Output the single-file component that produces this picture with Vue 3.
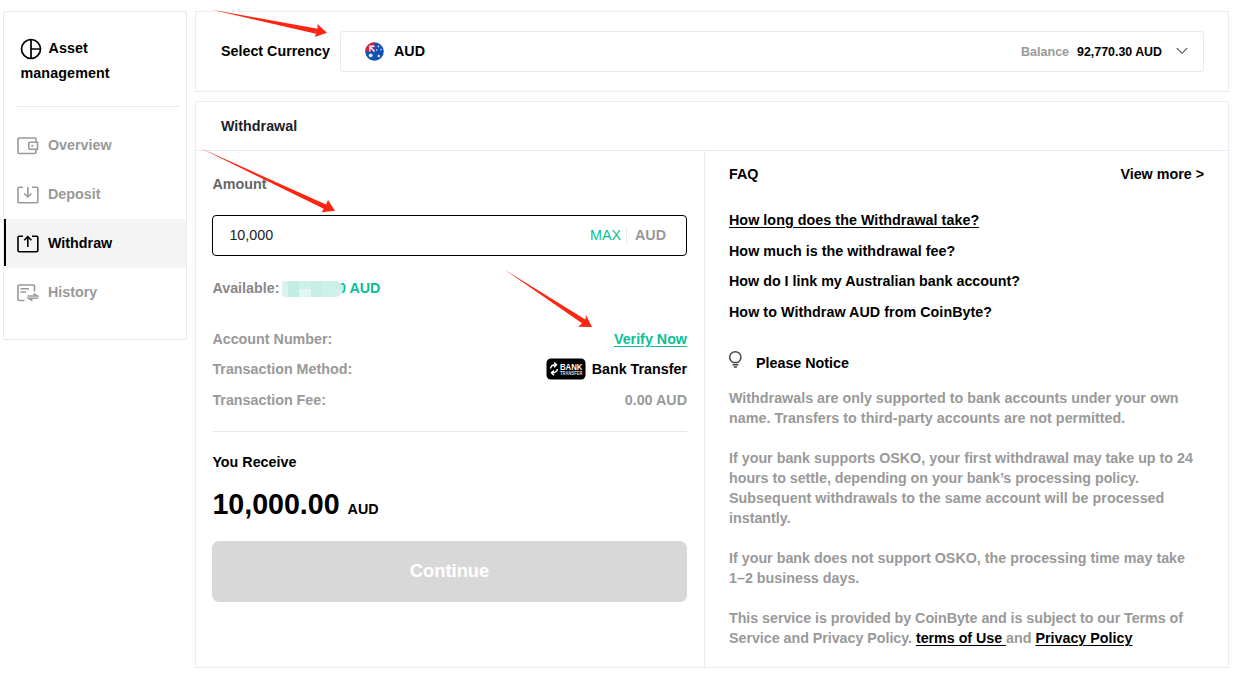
<script setup>
const faqs = [
  'How long does the Withdrawal take?',
  'How much is the withdrawal fee?',
  'How do I link my Australian bank account?',
  'How to Withdraw AUD from CoinByte?',
]
const navItems = [
  { id: 'overview', label: 'Overview' },
  { id: 'deposit', label: 'Deposit' },
  { id: 'withdraw', label: 'Withdraw', active: true },
  { id: 'history', label: 'History' },
]
const mosaic = ['#d9f3ee', '#c3ede3', '#cdf0e8', '#c7eee5', '#cdf0e8', '#c8eee6', '#d9f3ee', '#c3ede3', '#dff6f1', '#c7eee5', '#cdf0e8', '#d3f2eb']
</script>

<template>
  <div class="page">
    <aside class="sidebar">
      <div class="title">
        <svg class="pie" width="22" height="22" viewBox="0 0 22 22" fill="none" stroke="#000" stroke-width="1.7">
          <circle cx="11" cy="11" r="9.5" /><path d="M11 1.5v19M11 11h9.5" />
        </svg>Asset<br />management
      </div>
      <nav>
        <a v-for="n in navItems" :key="n.id" class="nav" :class="{ active: n.active }">
          <svg width="22" height="18" viewBox="0 0 22 18" fill="none" stroke="currentColor" stroke-width="1.6">
            <template v-if="n.id === 'overview'">
              <path d="M19 5V2.200Q19 1 17.800 1H2.200Q1 1 1 2.200V15.300Q1 16.500 2.200 16.500H17.800Q19 16.500 19 15.300V12.500" />
              <path d="M20.500 5.300H13Q11.800 5.300 11.800 6.500V11Q11.800 12.200 13 12.200H20.500Z" /><path d="M14.300 8.800h2" stroke-width="1.800" />
            </template>
            <template v-else-if="n.id === 'history'">
              <path d="M7.500 16.500H2.200Q1 16.500 1 15.300V2.200Q1 1 2.200 1H16.300Q17.500 1 17.500 2.200V7.500M3.500 4.700h8.500M3.500 8h5.500" />
              <path d="M10.500 12H20.500L16.500 9.700M21 14.200H11.500L15.500 16.700" />
            </template>
            <template v-else>
              <path d="M6 1.200H2Q1 1.200 1 2.200V15.500Q1 16.700 2.200 16.700H19.600Q20.800 16.700 20.800 15.500V2.200Q20.800 1.200 19.800 1.200H15" />
              <path v-if="n.active" d="M10.800 12V1.500M7.200 5.200L10.800 1.700L14.400 5.200" />
              <path v-else d="M10.800 1V11M7.200 7.500L10.800 11L14.400 7.500" />
            </template>
          </svg>
          <span>{{ n.label }}</span>
        </a>
      </nav>
    </aside>

    <main>
      <section class="card currency">
        <label>Select Currency</label>
        <div class="select">
          <svg class="flag" width="20" height="20" viewBox="0 0 20 20">
            <circle cx="9.500" cy="10.500" r="9.300" fill="#0f52b5" />
            <path d="M9.500 1.200A9.300 9.300 0 0 0 .200 10.500H9.500Z" fill="#d4213d" />
            <path d="M4.600 5.500L9.500 10.500M9.500 5.400H4.900V10.500" fill="none" stroke="#f3eef5" stroke-width="1.600" />
            <path d="M7.500 6.300H9.500V8.500ZM5.800 8V10.500H8Z" fill="#0f52b5" />
            <g fill="#e8f0ff"><circle cx="5.700" cy="14.300" r="1.900" /><circle cx="13.500" cy="5.300" r=".9" /><circle cx="16" cy="8.500" r=".8" /><circle cx="11.800" cy="9" r=".8" /><circle cx="13.700" cy="15" r="1.200" /></g>
          </svg>
          <b>AUD</b>
          <span class="bal">Balance</span>
          <span class="val">92,770.30 AUD</span>
          <svg class="chev" width="12" height="8" viewBox="0 0 12 8" fill="none" stroke="#4a5058" stroke-width="1.100"><path d="M.800 1.200L6 6.300L11.200 1.200" /></svg>
        </div>
      </section>

      <section class="card withdrawal">
        <h2>Withdrawal</h2>
        <div class="cols">
          <div class="form">
            <div class="amount">Amount</div>
            <div class="input"><span class="num">10,000</span><span class="max">MAX</span><span class="cur">AUD</span></div>
            <div class="avail">
              <span>Available:</span>
              <span class="money"><i class="mask"><i v-for="(c, i) in mosaic" :key="i" :style="{ background: c }"></i></i><em>0</em> AUD</span>
            </div>
            <div class="row"><span>Account Number:</span><a class="verify">Verify Now</a></div>
            <div class="row">
              <span>Transaction Method:</span>
              <span class="bank">
                <svg width="40" height="22" viewBox="0 0 40 22">
                  <rect x=".5" y=".5" width="39" height="21" rx="4.500" fill="#000" />
                  <g fill="none" stroke="#fff" stroke-width="1.500"><path d="M4.500 10.500Q5 6.800 9.800 6.800M8 4.500L10.500 6.800L8 9.200M11.500 11Q11 14.800 6.200 14.800M8 12.500L5.500 14.800L8 17.200" /></g>
                  <text class="b1" x="14" y="11.800" textLength="22.500" lengthAdjust="spacingAndGlyphs">BANK</text>
                  <text class="b2" x="14" y="16.500" textLength="22.500" lengthAdjust="spacingAndGlyphs">TRANSFER</text>
                </svg>Bank Transfer
              </span>
            </div>
            <div class="row"><span>Transaction Fee:</span><span class="fee">0.00 AUD</span></div>
            <hr />
            <div class="receive">You Receive</div>
            <div class="total"><strong>10,000.00</strong><span>AUD</span></div>
            <button>Continue</button>
          </div>

          <div class="info">
            <div class="faqhead"><span>FAQ</span><span>View more &gt;</span></div>
            <ul>
              <li v-for="(f, i) in faqs" :key="f" :class="{ first: i === 0 }"><span>{{ f }}</span></li>
            </ul>
            <div class="notice">
              <svg width="13" height="18" viewBox="0 0 13 18" fill="none" stroke="#444" stroke-width="1.400">
                <path d="M4 11.500Q.700 9.500 .700 6.300A5.600 5.600 0 0 1 11.900 6.300Q11.900 9.500 8.800 11.500Z" /><path d="M3.500 13.700h5.800M4.800 16h3.200" stroke-width="1.500" />
              </svg>
              <span>Please Notice</span>
            </div>
            <p>Withdrawals are only supported to bank accounts under your own<br /><span class="wide">name. Transfers to third-party accounts are not permitted.</span></p>
            <p>If your bank supports OSKO, your first withdrawal may take up to 24<br /><span class="tight">hours to settle, depending on your bank’s processing policy.</span><br /><span class="wide">Subsequent withdrawals to the same account will be processed</span><br />instantly.</p>
            <p>If your bank does not support OSKO, the processing time may take<br />1–2 business days.</p>
            <p><span class="terms">This service is provided by CoinByte and is subject to our Terms of</span><br /><span class="tight">Service and Privacy Policy. <a>terms of Use&nbsp;</a></span>and <a>Privacy Policy</a></p>
          </div>
        </div>
      </section>
    </main>

    <svg class="arrows" width="1234" height="676" viewBox="0 0 1234 676" fill="#ff2512">
      <path d="M211 9.500L317.700 28.800L317.300 24L327 32.700L314.700 37L316 33.800Z" />
      <path d="M199 147.500L326 204.500L328 200L335 210.700L321.700 212.300L323.700 208.700Z" />
      <path d="M505 270L585.300 319.500L586 315.300L592 327L578.300 326.700L582 323.300Z" />
    </svg>
  </div>
</template>

<style>
body { background: #fff; }
</style>
<style scoped>
* { box-sizing: border-box; }
.page { position: relative; width: 1234px; height: 676px; overflow: hidden; display: flex; gap: 8px; padding: 11px 5px 0 3px; align-items: flex-start; font: bold 14.300px/20px "Liberation Sans", Arial, sans-serif; color: #000; }
.sidebar { width: 184px; height: 329px; border: 1px solid #e7e9f1; border-radius: 2px; }
.title { height: 95px; margin-left: 13px; margin-right: 6px; padding: 24px 0 0 3.500px; border-bottom: 1px solid #e7e9f1; line-height: 25px; letter-spacing: .1px; }
.pie { vertical-align: -7px; margin-right: 7px; margin-left: -1px; }
nav { padding-top: 14px; }
.nav { display: flex; align-items: center; height: 49px; padding-left: 13px; color: #999; position: relative; }
.nav span { margin-left: 9px; margin-top: -1px; }
.nav.active { background: #f4f4f4; color: #000; }
.nav.active::before { content: ""; position: absolute; left: 0; top: 0; width: 2px; height: 47px; background: #000; }
main { flex: 1; display: flex; flex-direction: column; gap: 9px; }
.card { border: 1px solid #e9edf4; }
.currency { height: 81px; display: flex; align-items: center; padding: 0 24px 0 25px; }
.currency label { width: 119px; white-space: nowrap; margin-top: -1px; }
.select { flex: 1; height: 41px; margin-top: -1px; border: 1px solid #e9ebf2; border-radius: 2px; display: flex; align-items: center; padding: 0 15px 0 24px; }
.select b { margin-left: 9px; }
.bal { margin-left: auto; font-size: 12.500px; color: #999; padding-top: 1px; }
.val { margin-left: 8px; font-size: 12.400px; padding-top: 1px; }
.chev { margin: -1px 0 0 14px; }
.withdrawal { height: 567px; display: flex; flex-direction: column; }
h2 { margin: 0; height: 49px; padding-left: 25px; font-size: 14.300px; line-height: 49px; border-bottom: 1px solid #e5ebf2; color: #1c2127; }
.cols { flex: 1; display: flex; }
.form { width: 509px; border-right: 1px solid #e9edf4; padding: 23px 17px 0 16.400px; }
.amount { color: #666; }
.input { height: 41px; margin: 21px 0 0 -.4px; border: 1px solid #000; border-radius: 4px; display: flex; align-items: center; padding: 0 20px 1px 16.400px; font-weight: normal; }
.num { color: #222; }
.max { color: #0abf95; margin-left: auto; padding-right: 5px; }
.cur { border-left: 1px solid #e8e8e8; padding-left: 8px; line-height: 16px; color: #999; font-weight: bold; }
.avail { margin: 22px 0 31px; color: #888; display: flex; }
.money { color: #0abf95; margin-left: 2.600px; display: flex; white-space: pre; }
.mask { position: relative; z-index: 1; margin-top: 3px; width: 61px; height: 16px; display: grid; grid-template-columns: 6px 11px 12px 12px 12px 8px; border-radius: 2px 8px 8px 2px; overflow: hidden; }
.money em { font-style: normal; margin-left: -5px; }
.row { display: flex; justify-content: space-between; color: #999; height: 20px; margin-bottom: 10.300px; line-height: 20px; }
.verify { color: #0abf95; text-decoration: underline; text-underline-offset: 2px; }
.bank { display: flex; align-items: center; color: #000; }
.bank svg { margin-right: 6px; }
.b1 { font-size: 8.500px; fill: #fff; }
.b2 { font-size: 4.800px; fill: #ddd; }
hr { border: 0; border-top: 1px solid #e8e8e8; margin: 21px 0 20px; }
.total { height: 40px; margin-top: 12px; display: flex; align-items: baseline; line-height: 40px; }
.total strong { font-size: 28.600px; }
.total span { margin-left: 8px; }
button { width: calc(100% + .4px); height: 61px; margin: 17px 0 0 -.4px; display: block; border: 0; border-radius: 7px; background: #d8d8d8; color: #fff; font: bold 18.400px/60px "Liberation Sans", Arial, sans-serif; padding: 0; }
.info { flex: 1; padding: 13px 24px 0; white-space: nowrap; }
.faqhead { display: flex; justify-content: space-between; }
ul { list-style: none; margin: 26px 0 0; padding: 0; }
li { height: 20px; margin-bottom: 10.700px; }
li:not(:nth-child(3)) { letter-spacing: .05px; }
.first span { text-decoration: underline; text-underline-offset: 2px; }
.notice { display: flex; align-items: center; margin-top: 31px; }
.notice svg { margin: -6px 14px 0 0; }
p { margin: 0 0 20px; color: #999; line-height: 20.050px; }
.notice + p { margin-top: 14.500px; }
p a { color: #000; text-decoration: underline; text-underline-offset: 2px; }
.wide { letter-spacing: .04px; }
.tight { letter-spacing: -.04px; }
.terms { letter-spacing: -.05px; }
.arrows { position: absolute; left: 0; top: 0; pointer-events: none; }
</style>
